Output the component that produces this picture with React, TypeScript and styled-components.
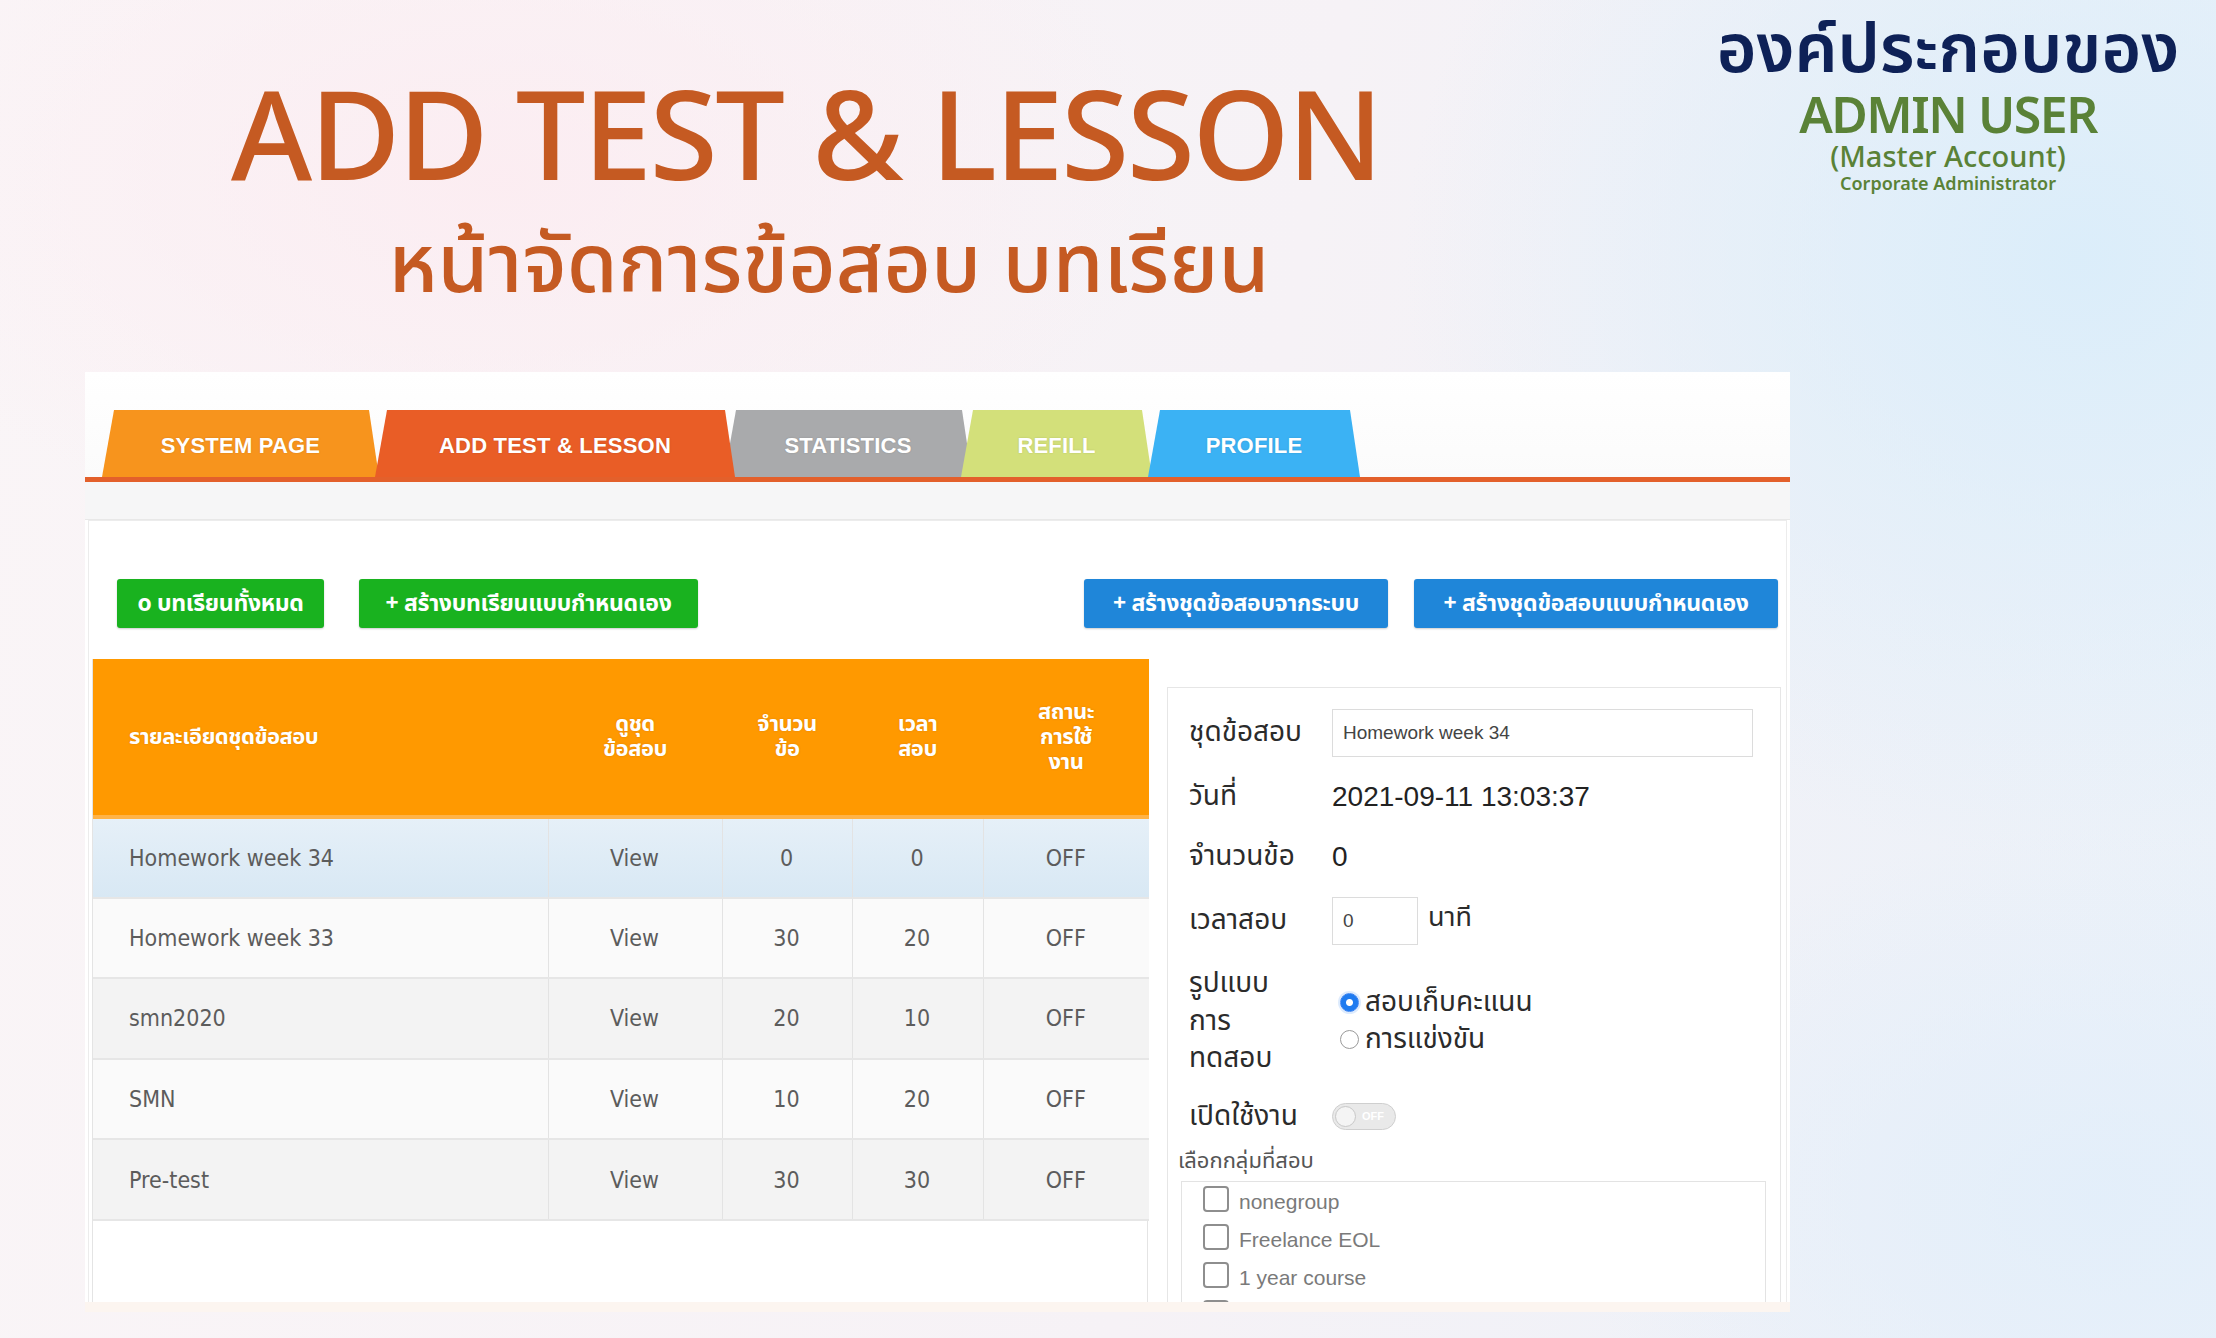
import React from "react";
import styled, { createGlobalStyle } from "styled-components";

const THAI = `"Noto Sans Thai", "Noto Sans Thai UI", "Noto Sans", "DejaVu Sans", sans-serif`;
const NARROW = `"Liberation Sans Narrow", "DejaVu Sans Condensed", "Liberation Sans", "Noto Sans Thai", sans-serif`;
const ARIAL = `"Liberation Sans", "Noto Sans Thai", Arial, sans-serif`;

const Global = createGlobalStyle`
  html, body { margin: 0; padding: 0; }
  body { font-family: ${THAI}; }
  * { box-sizing: border-box; }
`;

const Page = styled.div`
  width: 2216px;
  height: 1338px;
  overflow: hidden;
  display: flex;
  flex-direction: column;
  background:
    radial-gradient(ellipse 900px 800px at 2080px 260px, rgba(218, 237, 250, 0.95), rgba(218, 237, 250, 0) 75%),
    radial-gradient(ellipse 700px 500px at 2100px 1200px, rgba(226, 238, 250, 0.9), rgba(226, 238, 250, 0) 75%),
    radial-gradient(ellipse 900px 500px at 500px 180px, rgba(252, 236, 241, 0.9), rgba(252, 236, 241, 0) 75%),
    linear-gradient(100deg, #faf5f7 0%, #f6f2f6 55%, #eaf1f9 100%);
`;

const Header = styled.header`
  height: 372px;
  display: flex;
  flex-shrink: 0;
`;

const TitleBlock = styled.div`
  width: 1612px;
  padding-top: 70px;
  display: flex;
  flex-direction: column;
  align-items: center;
`;

const Title = styled.h1`
  margin: 0;
  font-family: "Noto Sans", sans-serif;
  font-weight: 500;
  font-size: 124px;
  line-height: 124px;
  letter-spacing: -2.5px;
  color: #c55a22;
`;

const Subtitle = styled.h2`
  margin: 24px 0 0 46px;
  font-family: ${THAI};
  font-weight: 500;
  font-size: 82px;
  line-height: 98px;
  color: #c55a22;
`;

const Brand = styled.div`
  flex: 1;
  padding: 14px 0 0 68px;
  display: flex;
  flex-direction: column;
  align-items: center;
`;

const BrandThai = styled.div`
  font-family: ${THAI};
  font-weight: 600;
  font-size: 68px;
  line-height: 75px;
  color: #0e2157;
`;

const BrandAdmin = styled.div`
  font-family: "Noto Sans", sans-serif;
  font-weight: 600;
  font-size: 50px;
  line-height: 50px;
  letter-spacing: -1.5px;
  color: #5a8237;
`;

const BrandMaster = styled.div`
  font-family: "Noto Sans", sans-serif;
  font-weight: 500;
  font-size: 29px;
  line-height: 33px;
  color: #5a8237;
`;

const BrandCorp = styled.div`
  font-family: "Noto Sans", sans-serif;
  font-weight: 600;
  font-size: 18px;
  line-height: 22px;
  color: #5a8237;
`;

const Shot = styled.section`
  margin-left: 85px;
  width: 1705px;
  height: 940px;
  background: #ffffff;
  display: flex;
  flex-direction: column;
  overflow: hidden;
  border-bottom: 10px solid #fcf5f0;
`;

const TabBar = styled.nav`
  height: 110px;
  padding: 38px 0 0 17px;
  display: flex;
  align-items: flex-end;
  border-bottom: 5px solid #e3602b;
  background: linear-gradient(#ffffff, #fbfbfb);
  flex-shrink: 0;
`;

const Tab = styled.div<{ $bg: string; $w: number; $ml: number; $top?: boolean }>`
  width: ${(p) => p.$w}px;
  height: 67px;
  margin-left: ${(p) => p.$ml}px;
  background: ${(p) => p.$bg};
  clip-path: polygon(12px 0, calc(100% - 10px) 0, 100% 100%, 0 100%);
  position: relative;
  z-index: ${(p) => (p.$top ? 2 : 1)};
  display: flex;
  align-items: center;
  justify-content: center;
  padding-top: 4px;
  font-family: ${ARIAL};
  font-weight: 700;
  font-size: 22px;
  letter-spacing: 0.2px;
  color: #ffffff;
  text-shadow: 0 0 2px rgba(0, 0, 0, 0.15);
`;

const SubBand = styled.div`
  height: 38px;
  background: #f6f6f7;
  border-bottom: 1px solid #e8e8e8;
  flex-shrink: 0;
`;

const Content = styled.div`
  flex: 1;
  margin: 0 3px;
  border: 1px solid #ececec;
  border-bottom: none;
  padding: 58px 8px 0 3px;
  display: flex;
  flex-direction: column;
  min-height: 0;
`;

const ButtonRow = styled.div`
  display: flex;
  align-items: center;
  height: 49px;
  padding-left: 25px;
  gap: 35px;
`;

const RightButtons = styled.div`
  margin-left: auto;
  display: flex;
  gap: 26px;
`;

const ActionButton = styled.div<{ $color: string; $w: number }>`
  width: ${(p) => p.$w}px;
  height: 49px;
  background: ${(p) => p.$color};
  border-radius: 3px;
  box-shadow: 0 1px 2px rgba(0, 0, 0, 0.2);
  display: flex;
  align-items: center;
  justify-content: center;
  font-family: ${THAI};
  font-weight: 700;
  font-size: 23px;
  letter-spacing: -0.3px;
  color: #ffffff;
  white-space: nowrap;
`;

const Main = styled.div`
  margin-top: 31px;
  flex: 1;
  display: grid;
  grid-template-columns: 1056px 614px;
  column-gap: 19px;
  min-height: 0;
`;

const TableWrap = styled.div`
  border-left: 1px solid #e4e4e4;
  border-right: 1px solid #e4e4e4;
`;

const Table = styled.table`
  width: 1056px;
  border-collapse: collapse;
  table-layout: fixed;
`;

const Th = styled.th<{ $left?: boolean }>`
  height: 158px;
  background: #ff9900;
  border-bottom: 4px solid #ffb347;
  color: #ffffff;
  font-family: ${THAI};
  font-weight: 700;
  font-size: 22px;
  line-height: 25px;
  letter-spacing: -0.5px;
  text-align: ${(p) => (p.$left ? "left" : "center")};
  padding: ${(p) => (p.$left ? "0 0 0 36px" : "0")};
  vertical-align: middle;
  text-shadow: 0 0 2px rgba(120, 60, 0, 0.25);
`;

const Tr = styled.tr<{ $bg: string }>`
  height: 80.6px;
  background: ${(p) => p.$bg};
`;

const Td = styled.td<{ $left?: boolean }>`
  border: 1px solid #e3e3e3;
  border-left: none;
  border-top: none;
  border-bottom: 2px solid #e6e6e6;
  &:last-child { border-right: none; }
  font-family: ${NARROW};
  font-size: 23px;
  color: #5c5c5c;
  text-align: ${(p) => (p.$left ? "left" : "center")};
  padding-left: ${(p) => (p.$left ? "36px" : "0")};
  vertical-align: middle;
`;

const FormPanel = styled.div`
  margin-top: 28px;
  border: 1px solid #e6e6e6;
  padding: 21px 14px 0 0;
  display: flex;
  flex-direction: column;
`;

const FormGrid = styled.div`
  display: grid;
  grid-template-columns: 143px 1fr;
  row-gap: 20px;
  padding-left: 21px;
`;

const Label = styled.div<{ $h: number }>`
  min-height: ${(p) => p.$h}px;
  display: flex;
  align-items: center;
  font-family: ${THAI};
  font-size: 28px;
  line-height: 37.5px;
  color: #2b2b2b;
`;

const Value = styled.div<{ $h: number }>`
  min-height: ${(p) => p.$h}px;
  display: flex;
  align-items: center;
  gap: 10px;
  font-family: ${ARIAL};
  font-size: 28px;
  color: #222;
`;

const TextBox = styled.div<{ $w: number }>`
  width: ${(p) => p.$w}px;
  height: 48px;
  border: 1px solid #dcdcdc;
  display: flex;
  align-items: center;
  padding-left: 10px;
  font-family: ${ARIAL};
  font-size: 19px;
  color: #444;
`;

const Unit = styled.span`
  font-family: ${THAI};
  font-size: 27px;
  color: #2b2b2b;
  align-self: flex-start;
  margin-top: 0;
`;

const RadioList = styled.div`
  display: flex;
  flex-direction: column;
  gap: 2px;
  padding-left: 8px;
`;

const RadioItem = styled.label`
  display: flex;
  align-items: center;
  gap: 6px;
  font-family: ${THAI};
  font-size: 28px;
  line-height: 35px;
  color: #2b2b2b;
`;

const RadioDot = styled.span<{ $on?: boolean }>`
  width: 19px;
  height: 19px;
  border-radius: 50%;
  border: 1px solid ${(p) => (p.$on ? "#3b82f0" : "#9a9a9a")};
  background: ${(p) => (p.$on ? "radial-gradient(circle, #ffffff 0 3px, #1e7bf0 4px)" : "#ffffff")};
  box-shadow: ${(p) => (p.$on ? "0 0 0 2px rgba(30,123,240,0.15)" : "none")};
  flex-shrink: 0;
`;

const Toggle = styled.div`
  width: 64px;
  height: 27px;
  border-radius: 14px;
  background: #e9e9e9;
  border: 1px solid #cfcfcf;
  display: flex;
  align-items: center;
  padding: 0 2px;
  gap: 6px;
  font-family: ${ARIAL};
  font-weight: 700;
  font-size: 11px;
  color: #ffffff;
`;

const Knob = styled.span`
  width: 21px;
  height: 21px;
  border-radius: 50%;
  background: #f4f4f4;
  border: 1px solid #c8c8c8;
`;

const GroupTitle = styled.div`
  margin: 12px 0 0 10px;
  font-family: ${THAI};
  font-size: 22px;
  line-height: 30px;
  color: #555;
`;

const GroupBox = styled.div`
  margin: 4px 0 0 13px;
  border: 1px solid #e3e3e3;
  padding: 4px 0 0 21px;
  display: flex;
  flex-direction: column;
  gap: 10px;
  height: 200px;
`;

const CheckItem = styled.div`
  display: flex;
  align-items: flex-end;
  gap: 10px;
  font-family: ${ARIAL};
  font-size: 21px;
  color: #7a7a7a;
  height: 28px;
`;

const CheckBox = styled.span`
  width: 26px;
  height: 26px;
  border: 2px solid #8e8e8e;
  border-radius: 4px;
  background: #fff;
  flex-shrink: 0;
  margin-bottom: 2px;
`;

const tabs = [
  { label: "SYSTEM PAGE", bg: "#f7941d", w: 277, ml: 0 },
  { label: "ADD TEST & LESSON", bg: "#e95d26", w: 360, ml: -4, top: true },
  { label: "STATISTICS", bg: "#a9aaac", w: 248, ml: -11 },
  { label: "REFILL", bg: "#d3e07a", w: 191, ml: -11 },
  { label: "PROFILE", bg: "#3bb2f4", w: 212, ml: -4, top: true },
];

const rows = [
  { name: "Homework week 34", n: "0", t: "0", bg: "linear-gradient(#e6f0f8, #d8e8f4)" },
  { name: "Homework week 33", n: "30", t: "20", bg: "#fafafa" },
  { name: "smn2020", n: "20", t: "10", bg: "#f3f3f3" },
  { name: "SMN", n: "10", t: "20", bg: "#fafafa" },
  { name: "Pre-test", n: "30", t: "30", bg: "#f3f3f3" },
];

const groups = ["nonegroup", "Freelance EOL", "1 year course", ""];

export default function App() {
  return (
    <Page>
      <Global />
      <Header>
        <TitleBlock>
          <Title>ADD TEST &amp; LESSON</Title>
          <Subtitle>หน้าจัดการข้อสอบ บทเรียน</Subtitle>
        </TitleBlock>
        <Brand>
          <BrandThai>องค์ประกอบของ</BrandThai>
          <BrandAdmin>ADMIN USER</BrandAdmin>
          <BrandMaster>(Master Account)</BrandMaster>
          <BrandCorp>Corporate Administrator</BrandCorp>
        </Brand>
      </Header>

      <Shot>
        <TabBar>
          {tabs.map((t) => (
            <Tab key={t.label} $bg={t.bg} $w={t.w} $ml={t.ml} $top={t.top}>
              {t.label}
            </Tab>
          ))}
        </TabBar>
        <SubBand />
        <Content>
          <ButtonRow>
            <ActionButton $color="#19b21f" $w={207}>o บทเรียนทั้งหมด</ActionButton>
            <ActionButton $color="#19b21f" $w={339}>+ สร้างบทเรียนแบบกำหนดเอง</ActionButton>
            <RightButtons>
              <ActionButton $color="#1f86d9" $w={304}>+ สร้างชุดข้อสอบจากระบบ</ActionButton>
              <ActionButton $color="#1f86d9" $w={364}>+ สร้างชุดข้อสอบแบบกำหนดเอง</ActionButton>
            </RightButtons>
          </ButtonRow>

          <Main>
            <TableWrap>
              <Table>
                <colgroup>
                  <col style={{ width: 455 }} />
                  <col style={{ width: 174 }} />
                  <col style={{ width: 130 }} />
                  <col style={{ width: 131 }} />
                  <col style={{ width: 166 }} />
                </colgroup>
                <thead>
                  <tr>
                    <Th $left>รายละเอียดชุดข้อสอบ</Th>
                    <Th>ดูชุด<br />ข้อสอบ</Th>
                    <Th>จำนวน<br />ข้อ</Th>
                    <Th>เวลา<br />สอบ</Th>
                    <Th>สถานะ<br />การใช้<br />งาน</Th>
                  </tr>
                </thead>
                <tbody>
                  {rows.map((r) => (
                    <Tr key={r.name} $bg={r.bg}>
                      <Td $left>{r.name}</Td>
                      <Td>View</Td>
                      <Td>{r.n}</Td>
                      <Td>{r.t}</Td>
                      <Td>OFF</Td>
                    </Tr>
                  ))}
                </tbody>
              </Table>
            </TableWrap>

            <FormPanel>
              <FormGrid>
                <Label $h={48}>ชุดข้อสอบ</Label>
                <Value $h={48}>
                  <TextBox $w={421}>Homework week 34</TextBox>
                </Value>
                <Label $h={40}>วันที่</Label>
                <Value $h={40}>2021-09-11 13:03:37</Value>
                <Label $h={40}>จำนวนข้อ</Label>
                <Value $h={40}>0</Value>
                <Label $h={48}>เวลาสอบ</Label>
                <Value $h={48}>
                  <TextBox $w={86}>0</TextBox>
                  <Unit>นาที</Unit>
                </Value>
                <Label $h={112}>รูปแบบ<br />การ<br />ทดสอบ</Label>
                <Value $h={112}>
                  <RadioList>
                    <RadioItem><RadioDot $on />สอบเก็บคะแนน</RadioItem>
                    <RadioItem><RadioDot />การแข่งขัน</RadioItem>
                  </RadioList>
                </Value>
                <Label $h={34}>เปิดใช้งาน</Label>
                <Value $h={34}>
                  <Toggle><Knob />OFF</Toggle>
                </Value>
              </FormGrid>
              <GroupTitle>เลือกกลุ่มที่สอบ</GroupTitle>
              <GroupBox>
                {groups.map((g, i) => (
                  <CheckItem key={i}>
                    <CheckBox />
                    {g}
                  </CheckItem>
                ))}
              </GroupBox>
            </FormPanel>
          </Main>
        </Content>
      </Shot>
    </Page>
  );
}
